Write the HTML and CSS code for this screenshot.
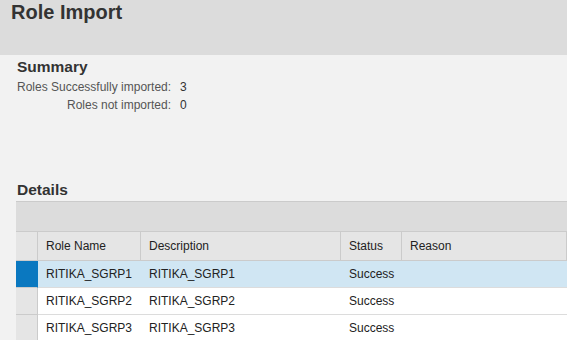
FILE: index.html
```html
<!DOCTYPE html>
<html lang="en">
<head>
    <meta charset="UTF-8">
    <meta name="viewport" content="width=device-width, initial-scale=1.0">
    <title>Role Import</title>
    <link rel="stylesheet" href="styles.css">
</head>
<body>
    <div class="page-header">
        <h1>Role Import</h1>
    </div>

    <div class="summary">
        <h2>Summary</h2>
        <div class="summary-grid">
            <span class="label">Roles Successfully imported:</span>
            <span class="value">3</span>
            <span class="label">Roles not imported:</span>
            <span class="value">0</span>
        </div>
    </div>

    <div class="details">
        <h2>Details</h2>
        <div class="grid-table">
            <div class="toolbar"></div>
            <div class="row head">
                <div class="cell sel"></div>
                <div class="cell">Role Name</div>
                <div class="cell">Description</div>
                <div class="cell">Status</div>
                <div class="cell">Reason</div>
            </div>
            <div class="row selected">
                <div class="cell sel"></div>
                <div class="cell">RITIKA_SGRP1</div>
                <div class="cell">RITIKA_SGRP1</div>
                <div class="cell">Success</div>
                <div class="cell"></div>
            </div>
            <div class="row">
                <div class="cell sel"></div>
                <div class="cell">RITIKA_SGRP2</div>
                <div class="cell">RITIKA_SGRP2</div>
                <div class="cell">Success</div>
                <div class="cell"></div>
            </div>
            <div class="row">
                <div class="cell sel"></div>
                <div class="cell">RITIKA_SGRP3</div>
                <div class="cell">RITIKA_SGRP3</div>
                <div class="cell">Success</div>
                <div class="cell"></div>
            </div>
        </div>
    </div>
</body>
</html>
```

FILE: styles.css
```css
body {
    font-family: Arial, "Liberation Sans", sans-serif;
    font-size: 12px;
    color: #333;
    margin: 0;
    background-color: #f2f2f2;
}
.page-header {
    background-color: #dcdcdc;
    height: 55px;
    padding-left: 11px;
}
.page-header h1 {
    margin: 0;
    font-size: 20px;
    line-height: 24px;
    font-weight: bold;
    color: #333;
}
h2 {
    margin: 0;
    font-size: 15.5px;
    line-height: 18px;
    font-weight: bold;
    color: #333;
}
.summary {
    padding: 3px 0 0 17px;
}
.summary-grid {
    display: grid;
    grid-template-columns: max-content max-content;
    column-gap: 9px;
    margin-top: 2px;
    line-height: 18px;
}
.summary-grid .label {
    text-align: right;
    color: #555;
}
.summary-grid .value {
    color: #333;
}
.details {
    padding: 67px 0 0 16px;
}
.details h2 {
    padding-left: 1px;
    margin-bottom: 2px;
}
.toolbar {
    height: 29px;
    background-color: #dcdcdc;
    border-top: 1px solid #cbcbcb;
    border-bottom: 1px solid #cbcbcb;
}
.row {
    display: grid;
    grid-template-columns: 22px 103px 200px 61px 1fr;
    height: 27px;
    background-color: #fff;
    border-bottom: 1px solid #dcdcdc;
    box-sizing: border-box;
}
.row.head {
    height: 29px;
    background-color: #e5e5e5;
    border-bottom: 1px solid #cbcbcb;
}
.row.head .cell {
    border-right: 1px solid #cbcbcb;
}
.cell {
    display: flex;
    align-items: center;
    padding: 0 8px;
    white-space: nowrap;
    overflow: hidden;
    box-sizing: border-box;
    color: #222;
}
.cell.sel {
    padding: 0;
    background-color: #e5e5e5;
    border-right: 1px solid #cbcbcb;
}
.row:not(.head) .cell.sel {
    border-bottom: 1px solid #cbcbcb;
    margin-bottom: -1px;
}
.row.selected {
    background-color: #d0e6f3;
}
.row.selected .cell.sel {
    background-color: #0a78c0;
    border-right-color: #0a78c0;
}
```
